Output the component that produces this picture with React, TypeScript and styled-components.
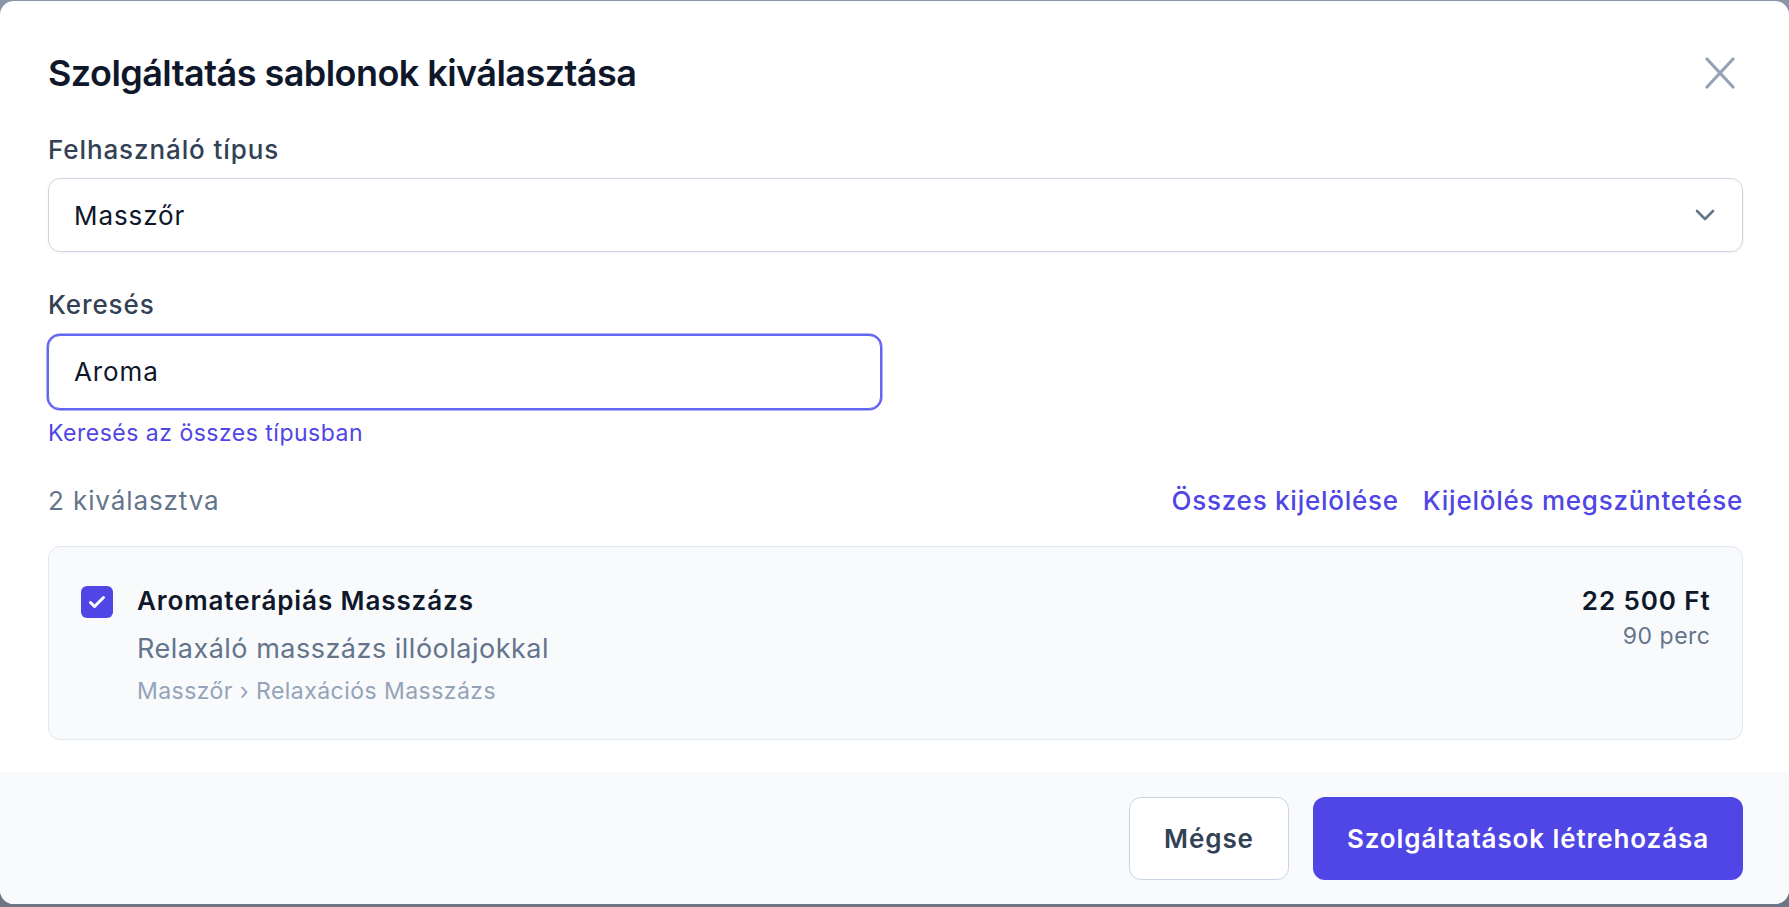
import styled, { createGlobalStyle } from "styled-components";

const GlobalStyle = createGlobalStyle`
  html, body {
    margin: 0;
    padding: 0;
  }
  body {
    font-family: Inter, "Noto Sans", "Liberation Sans", sans-serif;
    -webkit-font-smoothing: antialiased;
  }
  * {
    box-sizing: border-box;
  }
`

const Overlay = styled.div`
  height: 907px;
  padding: 1px 0 3px;
  background: linear-gradient(180deg, #8a95a8 0%, #6b7585 100%);
  overflow: hidden;
`

const Dialog = styled.div`
  height: 903px;
  background: #ffffff;
  border-radius: 14px;
  display: flex;
  flex-direction: column;
  overflow: hidden;
`

const Body = styled.div`
  flex: 1;
  padding: 48px 46px 0 48px;
`

const Header = styled.div`
  display: flex;
  justify-content: space-between;
  align-items: center;
  height: 48px;
`

const Title = styled.h2`
  margin: 0;
  font-size: 36px;
  line-height: 48px;
  font-weight: 600;
  color: #0f172a;
  letter-spacing: -0.55px;
`

const CloseButton = styled.button`
  border: none;
  background: none;
  padding: 0;
  margin-right: 8px;
  display: flex;
  cursor: pointer;
`

const Field = styled.div`
  margin-top: 34.5px;
`

const Label = styled.label`
  display: block;
  font-size: 26px;
  line-height: 36px;
  font-weight: 500;
  letter-spacing: 0.9px;
  color: #334155;
`

const SelectBox = styled.div`
  margin-top: 10.5px;
  height: 74px;
  border: 1.5px solid #cbd5e1;
  border-radius: 12px;
  padding: 0 27px 0 25px;
  display: flex;
  justify-content: space-between;
  align-items: center;
  box-shadow: 0 1px 3px rgba(15, 23, 42, 0.06);
  font-size: 26px;
  letter-spacing: 0.9px;
  color: #0f172a;
  cursor: pointer;
`

const SearchInput = styled.input`
  display: block;
  margin-top: 12px;
  width: calc(50% - 15px);
  height: 74px;
  border: 1.5px solid #6366f1;
  box-shadow: 0 0 0 1.5px #6366f1;
  border-radius: 12px;
  padding: 0 25px;
  font-family: inherit;
  font-size: 26px;
  letter-spacing: 0.9px;
  color: #0f172a;
  outline: none;
  background: #ffffff;
`

const HelperLink = styled.a`
  display: block;
  width: fit-content;
  margin-top: 9px;
  font-size: 23px;
  line-height: 30px;
  letter-spacing: 0.5px;
  color: #4f46e5;
  text-decoration: none;
  cursor: pointer;
`

const SelectionBar = styled.div`
  margin-top: 35.5px;
  display: flex;
  justify-content: space-between;
  align-items: center;
  font-size: 26px;
  line-height: 36px;
  letter-spacing: 0.9px;
`

const Count = styled.span`
  color: #64748b;
`

const Actions = styled.div`
  display: flex;
  gap: 24px;
`

const TextButton = styled.button`
  border: none;
  background: none;
  padding: 0;
  font-family: inherit;
  font-size: 26px;
  line-height: 36px;
  font-weight: 500;
  letter-spacing: 0.75px;
  color: #4f46e5;
  cursor: pointer;
`

const Card = styled.div`
  margin-top: 26.5px;
  border: 1.5px solid #e2e8f0;
  border-radius: 12px;
  background: #f8fafc;
  padding: 36.5px 31.5px 33px 32px;
  display: flex;
  justify-content: space-between;
  align-items: flex-start;
`

const CardMain = styled.div`
  display: flex;
  gap: 24px;
  align-items: flex-start;
`

const Checkbox = styled.span<{ $checked?: boolean }>`
  margin-top: 3px;
  width: 32px;
  height: 32px;
  border-radius: 6px;
  background: ${(p) => (p.$checked ? "#4f46e5" : "#ffffff")};
  display: flex;
  align-items: center;
  justify-content: center;
  flex-shrink: 0;
`

const ServiceName = styled.div`
  font-size: 26px;
  line-height: 36px;
  font-weight: 600;
  letter-spacing: 0.9px;
  color: #0f172a;
`

const ServiceDesc = styled.div`
  margin-top: 12px;
  font-size: 27px;
  line-height: 36px;
  letter-spacing: 0.5px;
  color: #64748b;
`

const Breadcrumb = styled.div`
  margin-top: 8.5px;
  font-size: 23px;
  line-height: 30px;
  letter-spacing: 0.45px;
  color: #94a3b8;
`

const PriceCol = styled.div`
  text-align: right;
`

const Price = styled.div`
  font-size: 26px;
  line-height: 36px;
  font-weight: 600;
  letter-spacing: 0.9px;
  color: #0f172a;
`

const Duration = styled.div`
  margin-top: 2px;
  font-size: 23px;
  line-height: 30px;
  letter-spacing: 0.5px;
  color: #64748b;
`

const Footer = styled.div`
  height: 132px;
  background: #f8fafc;
  padding: 0 46px 0 48px;
  display: flex;
  justify-content: flex-end;
  align-items: center;
  gap: 24px;
`

const Button = styled.button<{ $primary?: boolean }>`
  height: 83px;
  padding: 0 34px;
  border-radius: 12px;
  font-family: inherit;
  font-size: 26px;
  font-weight: 600;
  letter-spacing: 0.9px;
  cursor: pointer;
  border: ${(p) => (p.$primary ? "none" : "1.5px solid #cbd5e1")};
  background: ${(p) => (p.$primary ? "#4f46e5" : "#ffffff")};
  color: ${(p) => (p.$primary ? "#ffffff" : "#334155")};
`

const App = () => {
  return (
    <>
      <GlobalStyle />
      <Overlay>
        <Dialog>
          <Body>
            <Header>
              <Title>Szolgáltatás sablonok kiválasztása</Title>
              <CloseButton aria-label="Bezárás">
                <svg width="30" height="32" viewBox="0 0 30 32" fill="none">
                  <path
                    d="M2 2L28 30M28 2L2 30"
                    stroke="#94a3b8"
                    strokeWidth="3.2"
                    strokeLinecap="round"
                  />
                </svg>
              </CloseButton>
            </Header>

            <Field>
              <Label>Felhasználó típus</Label>
              <SelectBox>
                <span>Masszőr</span>
                <svg width="20" height="12" viewBox="0 0 20 12" fill="none">
                  <path
                    d="M2 2L10 10L18 2"
                    stroke="#64748b"
                    strokeWidth="2.6"
                    strokeLinecap="round"
                    strokeLinejoin="round"
                  />
                </svg>
              </SelectBox>
            </Field>

            <Field>
              <Label>Keresés</Label>
              <SearchInput value="Aroma" readOnly />
              <HelperLink>Keresés az összes típusban</HelperLink>
            </Field>

            <SelectionBar>
              <Count>2 kiválasztva</Count>
              <Actions>
                <TextButton>Összes kijelölése</TextButton>
                <TextButton>Kijelölés megszüntetése</TextButton>
              </Actions>
            </SelectionBar>

            <Card>
              <CardMain>
                <Checkbox $checked>
                  <svg width="18" height="14" viewBox="0 0 18 14" fill="none">
                    <path
                      d="M2.5 7.5L6.5 11.5L15.5 2.5"
                      stroke="#ffffff"
                      strokeWidth="3"
                      strokeLinecap="round"
                      strokeLinejoin="round"
                    />
                  </svg>
                </Checkbox>
                <div>
                  <ServiceName>Aromaterápiás Masszázs</ServiceName>
                  <ServiceDesc>Relaxáló masszázs illóolajokkal</ServiceDesc>
                  <Breadcrumb>Masszőr › Relaxációs Masszázs</Breadcrumb>
                </div>
              </CardMain>
              <PriceCol>
                <Price>22 500 Ft</Price>
                <Duration>90 perc</Duration>
              </PriceCol>
            </Card>
          </Body>

          <Footer>
            <Button>Mégse</Button>
            <Button $primary>Szolgáltatások létrehozása</Button>
          </Footer>
        </Dialog>
      </Overlay>
    </>
  )
}

export default App
